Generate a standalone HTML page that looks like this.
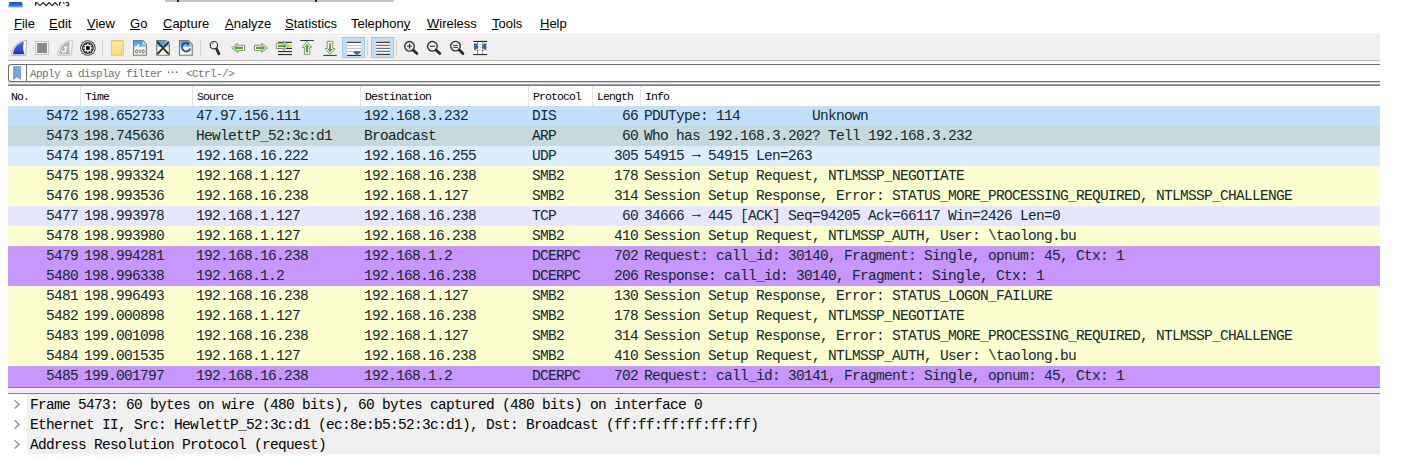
<!DOCTYPE html>
<html><head><meta charset="utf-8">
<style>
*{margin:0;padding:0;box-sizing:border-box}
html,body{width:1408px;height:460px;overflow:hidden;background:#fff;position:relative}
.a{position:absolute}
.menu{font-family:"Liberation Sans",sans-serif;font-size:13px;color:#000;line-height:16px;top:16px;white-space:pre}
.menu u{text-decoration:underline;text-decoration-thickness:1px;text-underline-offset:0.5px}
#tb{left:8px;top:34px;width:1372px;height:27px;background:#f0f0f0;border-top:2px solid #fafafa;border-bottom:1px solid #b9b9b9;box-shadow:inset 0 0 0 0 #000}
#tbl{left:8px;top:34px;width:1372px;height:1px;background:#e9e9e9}
#flt{left:8px;top:64px;width:1372px;height:18px;border:1px solid #6e6e6e;border-right:none;border-radius:3px 0 0 3px;background:#fff}
.hdr{font-family:"Liberation Mono",monospace;font-size:11.5px;letter-spacing:-0.9px;color:#000;top:90px;line-height:14px;white-space:pre}
.vs{top:86px;width:1px;height:20px;background:#e3e3e3}
.row{left:8px;width:1372px;height:20px}
.t{position:absolute;font-family:"Liberation Mono",monospace;font-size:14.5px;letter-spacing:-0.7px;color:#12282d;line-height:20px;top:0;white-space:pre}
.r{text-align:right}
.det{font-family:"Liberation Mono",monospace;font-size:14.5px;letter-spacing:-0.7px;color:#000;line-height:20px;white-space:pre;left:30px}
.chev{left:14px;width:7px;height:7px;border-right:1.5px solid #8a8a8a;border-bottom:1.5px solid #8a8a8a;transform:rotate(-45deg)}
</style></head><body>
<!-- title bar remnants -->
<svg class="a" style="left:0;top:0" width="80" height="10" viewBox="0 0 80 10"><defs><linearGradient id="gtt" x1="0" y1="0" x2="0" y2="1"><stop offset="0" stop-color="#0b4fd0"/><stop offset="0.6" stop-color="#2a6ee0"/><stop offset="1" stop-color="#9ab8e8"/></linearGradient></defs>
<path d="M9.5 2 H22 L23 7.4 H8.2 Z" fill="url(#gtt)"/>
<path d="M35.5 2.2 V5.8 M35.5 3.6 L37.6 2.4 M37.2 3.2 L40 5.6 L43 2.6 L46.2 5.6 L49 2.6 L52.4 5.6 L55 2.6 L58 5.6 M59.6 2.4 V5.8 M59.6 2.6 H61.2 M63 2.6 L64.6 3.4 M66 2.4 L68.6 3 V5.6 L66.4 5.6" fill="none" stroke="#1a1a1a" stroke-width="1.1"/></svg>
<div class="a" style="left:165px;top:0;width:229px;height:2px;background:#c6c6c6"></div>
<div class="a" style="left:177px;top:0;width:2px;height:2px;background:#222"></div>
<div class="a" style="left:315px;top:0;width:2px;height:2px;background:#222"></div>

<!-- menu -->
<div class="a menu" style="left:14px"><u>F</u>ile</div>
<div class="a menu" style="left:49px"><u>E</u>dit</div>
<div class="a menu" style="left:87px"><u>V</u>iew</div>
<div class="a menu" style="left:130px"><u>G</u>o</div>
<div class="a menu" style="left:163px"><u>C</u>apture</div>
<div class="a menu" style="left:225px"><u>A</u>nalyze</div>
<div class="a menu" style="left:285px"><u>S</u>tatistics</div>
<div class="a menu" style="left:351px">Telephon<u>y</u></div>
<div class="a menu" style="left:427px"><u>W</u>ireless</div>
<div class="a menu" style="left:492px"><u>T</u>ools</div>
<div class="a menu" style="left:540px"><u>H</u>elp</div>

<!-- toolbar -->
<div class="a" id="tb"></div><div class="a" id="tbl"></div>
<div id="icons"><svg class="a" style="left:0;top:0" width="500" height="62" viewBox="0 0 500 62">
<defs>
<linearGradient id="gfin" x1="0" y1="0" x2="0" y2="1"><stop offset="0" stop-color="#4f74e0"/><stop offset="1" stop-color="#1b35b5"/></linearGradient>
<linearGradient id="gfold" x1="0" y1="0" x2="0" y2="1"><stop offset="0" stop-color="#fde9a9"/><stop offset="1" stop-color="#fbdf86"/></linearGradient>
<linearGradient id="gsky" x1="0" y1="0" x2="0" y2="1"><stop offset="0" stop-color="#1e9ae6"/><stop offset="1" stop-color="#7ec4ee"/></linearGradient>
<linearGradient id="ggreen" x1="0" y1="0" x2="0" y2="1"><stop offset="0" stop-color="#5cc11f"/><stop offset="1" stop-color="#3e9a0e"/></linearGradient>
</defs>
<!-- shark fin -->
<path d="M11.4 55.3 C11.9 47 18 40.9 26.8 40.4 L25.8 55.3 Z" fill="#fafafa" stroke="#b4b4b4" stroke-width="1"/>
<path d="M13.1 54.2 C13.4 48 17.8 42.6 24.2 41.8 C23.2 44.5 22.9 47 23.2 49.3 C23.4 51 23.9 52.6 24.4 54.2 Z" fill="url(#gfin)"/>
<!-- stop -->
<rect x="35.5" y="41.5" width="13" height="13" fill="#fbfbfb" stroke="#c6c6c6" stroke-width="1"/>
<rect x="37" y="43" width="10" height="10" fill="#8a8a8a"/>
<!-- restart fin -->
<path d="M57.6 55.3 C58.1 47 64 40.9 72.4 40.4 L71.5 55.3 Z" fill="#fafafa" stroke="#c4c4c4" stroke-width="1"/>
<path d="M59.3 54.2 C59.6 48 63.6 42.6 70 41.8 C69.2 45 69.1 49 70.2 54.2 Z" fill="#b3b3b3"/>
<path d="M65.6 47.6 V50.6 A2.1 2.1 0 0 1 61.6 50.4" fill="none" stroke="#fbfbfb" stroke-width="1.5"/>
<path d="M64 46.6 H67.2 V48 H64 Z" fill="#fbfbfb"/>
<!-- gear -->
<circle cx="87.9" cy="48" r="7.3" fill="#fff" stroke="#4a4a4a" stroke-width="1.1"/>
<circle cx="87.9" cy="48" r="5.9" fill="#2a2a2a"/>
<g fill="#f2f2f2" transform="translate(87.9 48)">
<circle r="3.3"/>
<rect x="-0.75" y="-4.6" width="1.5" height="2"/>
<rect x="-0.75" y="-4.6" width="1.5" height="2" transform="rotate(45)"/>
<rect x="-0.75" y="-4.6" width="1.5" height="2" transform="rotate(90)"/>
<rect x="-0.75" y="-4.6" width="1.5" height="2" transform="rotate(135)"/>
<rect x="-0.75" y="-4.6" width="1.5" height="2" transform="rotate(180)"/>
<rect x="-0.75" y="-4.6" width="1.5" height="2" transform="rotate(225)"/>
<rect x="-0.75" y="-4.6" width="1.5" height="2" transform="rotate(270)"/>
<rect x="-0.75" y="-4.6" width="1.5" height="2" transform="rotate(315)"/>
</g>
<rect x="86" y="46.1" width="3.8" height="3.8" rx="1" fill="#111"/>
<!-- separators -->
<rect x="102" y="40.3" width="1" height="15.4" fill="#cfcfcf"/>
<rect x="200" y="40.3" width="1" height="15.4" fill="#cfcfcf"/>
<rect x="367" y="40.3" width="1" height="15.4" fill="#cfcfcf"/>
<rect x="396" y="40.3" width="1" height="15.4" fill="#cfcfcf"/>
<!-- folder -->
<rect x="111.6" y="40.6" width="11.6" height="14.6" rx="0.4" fill="url(#gfold)" stroke="#efc64a" stroke-width="1.1"/>
<rect x="121.3" y="49.3" width="2.2" height="6" fill="#fde59a" stroke="#efc64a" stroke-width="0.9"/>
<!-- file 010 -->
<path d="M133.6 40.6 H142.8 L146.3 44.5 V55.2 H133.6 Z" fill="#fbfbe9" stroke="#777" stroke-width="1.1"/>
<path d="M134.2 41.2 H142.5 L145.8 44.8 V46.8 H134.2 Z" fill="url(#gsky)"/>
<path d="M142.6 41.2 V44.6 H145.8 Z" fill="#f4ecd8"/>
<path d="M135.8 46.8 C137 46 138 44.2 138.8 43.2 L138.8 46.8 Z" fill="#fff"/>
<g fill="none" stroke="#6a6a6a" stroke-width="1"><ellipse cx="136.7" cy="51.4" rx="1.15" ry="1.7"/><path d="M139.3 50.2 L140.1 49.7 V53.2"/><ellipse cx="143.1" cy="51.4" rx="1.15" ry="1.7"/></g>
<!-- file X -->
<path d="M156.7 40.6 H165.9 L169.4 44.5 V55.2 H156.7 Z" fill="#fbfbe9" stroke="#777" stroke-width="1.1"/>
<path d="M157.3 41.2 H165.6 L168.9 44.8 V46.8 H157.3 Z" fill="url(#gsky)"/>
<path d="M165.7 41.2 V44.6 H168.9 Z" fill="#f4ecd8"/>
<path d="M157.8 42.3 L168.3 53.6 M168.3 42.3 L157.8 53.6" stroke="#2b2b2b" stroke-width="1.9" stroke-linecap="round"/>
<!-- file reload -->
<path d="M179.5 40.6 H188.7 L192.2 44.5 V55.2 H179.5 Z" fill="#fbfbe9" stroke="#777" stroke-width="1.1"/>
<path d="M180.1 41.2 H188.4 L191.7 44.8 V46.8 H180.1 Z" fill="url(#gsky)"/>
<path d="M188.5 41.2 V44.6 H191.7 Z" fill="#f4ecd8"/>
<path d="M189 43.8 A4.3 4.3 0 1 0 190.3 48.5" fill="none" stroke="#1a489c" stroke-width="1.8"/>
<path d="M186.3 42 L190.2 43.2 L187.6 46 Z" fill="#1a489c"/>
<!-- find -->
<circle cx="213.9" cy="45.2" r="3.7" fill="#f6f6f6" stroke="#333" stroke-width="1.2"/>
<path d="M212 44.3 A2 2 0 0 1 213.8 43" fill="none" stroke="#444" stroke-width="0.8"/>
<path d="M216.6 49 L218.9 53.8" stroke="#2a2a2a" stroke-width="2.8" stroke-linecap="round"/>
<!-- go back -->
<path d="M231.6 47.8 L237.4 43.4 V45.3 H244.6 V50.4 H237.4 V52.3 Z" fill="#fff" stroke="#7d7d7d" stroke-width="0.9" stroke-linejoin="round"/>
<path d="M233.6 47.8 L236.9 45.2 V46.7 H243 V49 H236.9 V50.4 Z" fill="#4fb01c"/>
<!-- go forward -->
<path d="M267.6 47.8 L261.6 43.4 V45.3 H254.4 V50.4 H261.6 V52.3 Z" fill="#fff" stroke="#7d7d7d" stroke-width="0.9" stroke-linejoin="round"/>
<path d="M265.4 47.8 L262.1 45.2 V46.7 H256 V49 H262.1 V50.4 Z" fill="#4fb01c"/>
<!-- go to packet -->
<rect x="278" y="41.8" width="14" height="1.1" fill="#2a2a2a"/>
<rect x="278" y="47.9" width="14" height="1.1" fill="#2a2a2a"/>
<rect x="278" y="51" width="14" height="1.1" fill="#2a2a2a"/>
<rect x="278" y="54" width="14" height="1.1" fill="#2a2a2a"/>
<rect x="288.6" y="44" width="3.4" height="2.9" fill="#f5e13b"/>
<path d="M288.6 45.8 L283.7 41.2 V43.2 H276.3 V48.5 H283.7 V50.5 Z" fill="#fff" stroke="#7d7d7d" stroke-width="0.9" stroke-linejoin="round"/>
<path d="M287 45.8 L283.7 43.2 V44.7 H277.8 V47 H283.7 V48.4 Z" fill="#4fb01c"/>
<!-- first packet -->
<rect x="300.1" y="40" width="13.8" height="1" fill="#3a3a3a"/>
<path d="M307 41.5 L311.8 47.3 H309.8 V54.4 H304.4 V47.3 H302.2 Z" fill="#fff" stroke="#7d7d7d" stroke-width="0.9" stroke-linejoin="round"/>
<path d="M307 43.8 L309.5 46.9 H308 V52.5 H306 V46.9 H304.5 Z" fill="url(#ggreen)"/>
<!-- last packet -->
<rect x="323" y="54.9" width="13.9" height="1" fill="#3a3a3a"/>
<path d="M330 54.2 L334.8 48.5 H332.8 V41.4 H327.2 V48.5 H325.2 Z" fill="#fff" stroke="#7d7d7d" stroke-width="0.9" stroke-linejoin="round"/>
<path d="M330 52.2 L332.6 48.9 H331 V43.2 H329 V48.9 H327.4 Z" fill="url(#ggreen)"/>
<!-- auto scroll (checked) -->
<rect x="342.5" y="37.5" width="22" height="20" fill="#c4ddf3" stroke="#98caf5" stroke-width="1"/>
<rect x="347" y="41.8" width="14" height="14" fill="#fdfdfb"/>
<rect x="347" y="41.8" width="14" height="1.1" fill="#2a2a2a"/>
<rect x="347" y="44.9" width="14" height="0.9" fill="#b8b8a8"/>
<rect x="347" y="47.9" width="14" height="0.9" fill="#b8b8a8"/>
<rect x="347" y="50.9" width="14" height="0.9" fill="#b8b8a8"/>
<rect x="347" y="54.9" width="14" height="1.1" fill="#2a2a2a"/>
<path d="M353 51.2 H361 C360.5 53 358.5 54.2 357.6 54.4 V55.4 H356.4 V54.4 C355.5 54.2 353.5 53 353 51.2 Z" fill="#3465a4"/>
<!-- colorize (checked) -->
<rect x="371.5" y="37.5" width="22" height="20" fill="#c4ddf3" stroke="#98caf5" stroke-width="1"/>
<rect x="376.2" y="41.8" width="13.8" height="13.2" fill="#fdfdfb"/>
<rect x="376.2" y="41.8" width="13.8" height="1.1" fill="#2a2a2a"/>
<rect x="376.2" y="44.8" width="13.8" height="1.1" fill="#ef2929"/>
<rect x="376.2" y="47.8" width="13.8" height="1.1" fill="#3465a4"/>
<rect x="376.2" y="50.8" width="13.8" height="1.1" fill="#75507b"/>
<rect x="376.2" y="53.8" width="13.8" height="1.1" fill="#2a2a2a"/>
<!-- zoom in -->
<circle cx="409.5" cy="46.3" r="4.8" fill="none" stroke="#2a2a2a" stroke-width="1.35"/>
<path d="M407 46.3 H412 M409.5 43.8 V48.8" stroke="#2a2a2a" stroke-width="1.1"/>
<path d="M413.3 50.2 L416.9 53.6" stroke="#2a2a2a" stroke-width="2.8" stroke-linecap="round"/>
<!-- zoom out -->
<circle cx="432.4" cy="46.3" r="4.8" fill="none" stroke="#2a2a2a" stroke-width="1.35"/>
<path d="M429.9 46.3 H434.9" stroke="#2a2a2a" stroke-width="1.1"/>
<path d="M436.2 50.2 L439.8 53.6" stroke="#2a2a2a" stroke-width="2.8" stroke-linecap="round"/>
<!-- zoom 100 -->
<circle cx="455.5" cy="46.1" r="4.8" fill="none" stroke="#2a2a2a" stroke-width="1.35"/>
<path d="M453.1 45.4 H458 M453.1 47.4 H458" stroke="#2a2a2a" stroke-width="0.9"/>
<path d="M459.3 50 L462.9 53.5" stroke="#2a2a2a" stroke-width="2.8" stroke-linecap="round"/>
<!-- resize columns -->
<rect x="473.2" y="41.4" width="13.9" height="13.3" fill="#fdfdf8"/>
<rect x="473.2" y="44" width="13.9" height="0.7" fill="#c5c5b5"/>
<rect x="473.2" y="47" width="13.9" height="0.7" fill="#c5c5b5"/>
<rect x="473.2" y="50.1" width="13.9" height="0.7" fill="#c5c5b5"/>
<rect x="477" y="41.4" width="1" height="13.3" fill="#8a8a8a"/>
<rect x="482.1" y="41.4" width="1" height="13.3" fill="#8a8a8a"/>
<rect x="473.2" y="40.9" width="13.9" height="1.1" fill="#2a2a2a"/>
<rect x="473.2" y="54" width="13.9" height="1.1" fill="#2a2a2a"/>
<path d="M474 43.2 L476 43.2 L478.5 46.5 L476 49.8 L474 49.8 Z" fill="#3465a4"/>
<path d="M486.3 43.2 L484.3 43.2 L481.8 46.5 L484.3 49.8 L486.3 49.8 Z" fill="#3465a4"/>
</svg></div>

<!-- filter -->
<div class="a" id="flt"></div>
<div class="a" style="left:13px;top:66px;width:8px;height:14px;background:linear-gradient(#80acdc,#6f9fd6);clip-path:polygon(0 0,100% 0,100% 100%,50% 80%,0 100%)"></div>
<div class="a" style="left:26px;top:65px;width:1px;height:16px;background:#6e6e6e"></div>
<div class="a hdr" style="left:30px;top:67px;color:#707070;-webkit-text-stroke:0;font-size:11px;letter-spacing:-0.6px">Apply a display filter    &lt;Ctrl-/&gt;</div><svg class="a" style="left:160px;top:68px" width="30" height="8"><circle cx="8.6" cy="4.2" r="0.85" fill="#707070"/><circle cx="12.6" cy="4.2" r="0.85" fill="#707070"/><circle cx="16.6" cy="4.2" r="0.85" fill="#707070"/></svg>
<div class="a" style="left:8px;top:82px;width:1372px;height:1px;background:#d6d6d6"></div><div class="a" style="left:8px;top:83px;width:1372px;height:1px;background:#f0f0f0"></div><div class="a" style="left:8px;top:84px;width:1372px;height:1px;background:#a0a3a7"></div><div class="a" style="left:8px;top:85px;width:1372px;height:1px;background:#7e8286"></div>

<!-- header -->
<div class="a hdr" style="left:11px">No.</div>
<div class="a hdr" style="left:85px">Time</div>
<div class="a hdr" style="left:197px">Source</div>
<div class="a hdr" style="left:365px">Destination</div>
<div class="a hdr" style="left:533px">Protocol</div>
<div class="a hdr" style="left:597px">Length</div>
<div class="a hdr" style="left:645px">Info</div>
<div class="a vs" style="left:80px"></div>
<div class="a vs" style="left:192px"></div>
<div class="a vs" style="left:360px"></div>
<div class="a vs" style="left:528px"></div>
<div class="a vs" style="left:592px"></div>
<div class="a vs" style="left:640px"></div>

<div id="rows">
<div class="a row" style="top:106px;height:20px;background:#c3e0fb"><span class="t r" style="right:1302px">5472</span><span class="t" style="left:76px">198.652733</span><span class="t" style="left:188px">47.97.156.111</span><span class="t" style="left:356px">192.168.3.232</span><span class="t" style="left:524px">DIS</span><span class="t r" style="right:742px">66</span><span class="t" style="left:636px">PDUType: 114         Unknown</span></div>
<div class="a row" style="top:126px;height:20px;background:#c7d9dc"><span class="t r" style="right:1302px">5473</span><span class="t" style="left:76px">198.745636</span><span class="t" style="left:188px">HewlettP_52:3c:d1</span><span class="t" style="left:356px">Broadcast</span><span class="t" style="left:524px">ARP</span><span class="t r" style="right:742px">60</span><span class="t" style="left:636px">Who has 192.168.3.202? Tell 192.168.3.232</span></div>
<div class="a row" style="top:146px;height:20px;background:#daeeff"><span class="t r" style="right:1302px">5474</span><span class="t" style="left:76px">198.857191</span><span class="t" style="left:188px">192.168.16.222</span><span class="t" style="left:356px">192.168.16.255</span><span class="t" style="left:524px">UDP</span><span class="t r" style="right:742px">305</span><span class="t" style="left:636px">54915 <span style="position:relative;top:-2px">→</span> 54915 Len=263</span></div>
<div class="a row" style="top:166px;height:20px;background:#feffd0"><span class="t r" style="right:1302px">5475</span><span class="t" style="left:76px">198.993324</span><span class="t" style="left:188px">192.168.1.127</span><span class="t" style="left:356px">192.168.16.238</span><span class="t" style="left:524px">SMB2</span><span class="t r" style="right:742px">178</span><span class="t" style="left:636px">Session Setup Request, NTLMSSP_NEGOTIATE</span></div>
<div class="a row" style="top:186px;height:20px;background:#feffd0"><span class="t r" style="right:1302px">5476</span><span class="t" style="left:76px">198.993536</span><span class="t" style="left:188px">192.168.16.238</span><span class="t" style="left:356px">192.168.1.127</span><span class="t" style="left:524px">SMB2</span><span class="t r" style="right:742px">314</span><span class="t" style="left:636px">Session Setup Response, Error: STATUS_MORE_PROCESSING_REQUIRED, NTLMSSP_CHALLENGE</span></div>
<div class="a row" style="top:206px;height:20px;background:#e7e6ff"><span class="t r" style="right:1302px">5477</span><span class="t" style="left:76px">198.993978</span><span class="t" style="left:188px">192.168.1.127</span><span class="t" style="left:356px">192.168.16.238</span><span class="t" style="left:524px">TCP</span><span class="t r" style="right:742px">60</span><span class="t" style="left:636px">34666 <span style="position:relative;top:-2px">→</span> 445 [ACK] Seq=94205 Ack=66117 Win=2426 Len=0</span></div>
<div class="a row" style="top:226px;height:20px;background:#feffd0"><span class="t r" style="right:1302px">5478</span><span class="t" style="left:76px">198.993980</span><span class="t" style="left:188px">192.168.1.127</span><span class="t" style="left:356px">192.168.16.238</span><span class="t" style="left:524px">SMB2</span><span class="t r" style="right:742px">410</span><span class="t" style="left:636px">Session Setup Request, NTLMSSP_AUTH, User: \taolong.bu</span></div>
<div class="a row" style="top:246px;height:20px;background:#c797ff"><span class="t r" style="right:1302px">5479</span><span class="t" style="left:76px">198.994281</span><span class="t" style="left:188px">192.168.16.238</span><span class="t" style="left:356px">192.168.1.2</span><span class="t" style="left:524px">DCERPC</span><span class="t r" style="right:742px">702</span><span class="t" style="left:636px">Request: call_id: 30140, Fragment: Single, opnum: 45, Ctx: 1</span></div>
<div class="a row" style="top:266px;height:20px;background:#c797ff"><span class="t r" style="right:1302px">5480</span><span class="t" style="left:76px">198.996338</span><span class="t" style="left:188px">192.168.1.2</span><span class="t" style="left:356px">192.168.16.238</span><span class="t" style="left:524px">DCERPC</span><span class="t r" style="right:742px">206</span><span class="t" style="left:636px">Response: call_id: 30140, Fragment: Single, Ctx: 1</span></div>
<div class="a row" style="top:286px;height:20px;background:#feffd0"><span class="t r" style="right:1302px">5481</span><span class="t" style="left:76px">198.996493</span><span class="t" style="left:188px">192.168.16.238</span><span class="t" style="left:356px">192.168.1.127</span><span class="t" style="left:524px">SMB2</span><span class="t r" style="right:742px">130</span><span class="t" style="left:636px">Session Setup Response, Error: STATUS_LOGON_FAILURE</span></div>
<div class="a row" style="top:306px;height:20px;background:#feffd0"><span class="t r" style="right:1302px">5482</span><span class="t" style="left:76px">199.000898</span><span class="t" style="left:188px">192.168.1.127</span><span class="t" style="left:356px">192.168.16.238</span><span class="t" style="left:524px">SMB2</span><span class="t r" style="right:742px">178</span><span class="t" style="left:636px">Session Setup Request, NTLMSSP_NEGOTIATE</span></div>
<div class="a row" style="top:326px;height:20px;background:#feffd0"><span class="t r" style="right:1302px">5483</span><span class="t" style="left:76px">199.001098</span><span class="t" style="left:188px">192.168.16.238</span><span class="t" style="left:356px">192.168.1.127</span><span class="t" style="left:524px">SMB2</span><span class="t r" style="right:742px">314</span><span class="t" style="left:636px">Session Setup Response, Error: STATUS_MORE_PROCESSING_REQUIRED, NTLMSSP_CHALLENGE</span></div>
<div class="a row" style="top:346px;height:20px;background:#feffd0"><span class="t r" style="right:1302px">5484</span><span class="t" style="left:76px">199.001535</span><span class="t" style="left:188px">192.168.1.127</span><span class="t" style="left:356px">192.168.16.238</span><span class="t" style="left:524px">SMB2</span><span class="t r" style="right:742px">410</span><span class="t" style="left:636px">Session Setup Request, NTLMSSP_AUTH, User: \taolong.bu</span></div>
<div class="a row" style="top:366px;height:21px;background:#c797ff"><span class="t r" style="right:1302px">5485</span><span class="t" style="left:76px">199.001797</span><span class="t" style="left:188px">192.168.16.238</span><span class="t" style="left:356px">192.168.1.2</span><span class="t" style="left:524px">DCERPC</span><span class="t r" style="right:742px">702</span><span class="t" style="left:636px">Request: call_id: 30141, Fragment: Single, opnum: 45, Ctx: 1</span></div>
</div>

<!-- splitter -->
<div class="a" style="left:8px;top:387px;width:1372px;height:1px;background:#7c8085"></div>
<div class="a" style="left:8px;top:388px;width:1372px;height:5px;background:#f0f0f0;border-top:1px solid #f6f6f6"></div>
<div class="a" style="left:8px;top:393px;width:1372px;height:1px;background:#80858a"></div>

<!-- details -->
<div class="a" style="left:27px;top:394px;width:1353px;height:60px;background:#f0f0f0"></div>
<svg class="a" style="left:0;top:394px" width="27" height="60" viewBox="0 394 27 60"><path d="M14.6 400.2 L19.2 404.4 L14.6 408.6 M14.6 420.2 L19.2 424.4 L14.6 428.6 M14.6 440.2 L19.2 444.4 L14.6 448.6" fill="none" stroke="#8c8c8c" stroke-width="1.3"/></svg>
<div class="a det" style="top:395px">Frame 5473: 60 bytes on wire (480 bits), 60 bytes captured (480 bits) on interface 0</div>
<div class="a det" style="top:415px">Ethernet II, Src: HewlettP_52:3c:d1 (ec:8e:b5:52:3c:d1), Dst: Broadcast (ff:ff:ff:ff:ff:ff)</div>
<div class="a det" style="top:435px">Address Resolution Protocol (request)</div>
</body></html>
